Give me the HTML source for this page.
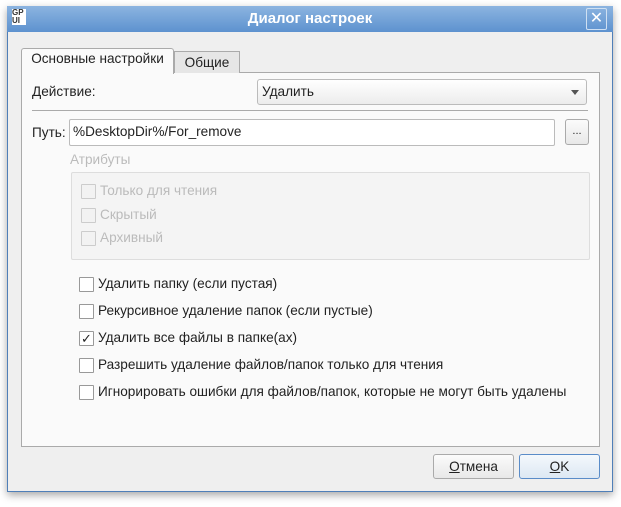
<!DOCTYPE html><html><head><meta charset="utf-8"><style>
body{margin:0;width:621px;height:507px;background:#fff;font-family:"Liberation Sans",sans-serif;font-size:13.6px;color:#222;position:relative;overflow:hidden}
.a{position:absolute}
.win{left:7px;top:6px;width:604px;height:484px;border:1px solid #4f7fb8;background:#efefef;box-shadow:0 3px 8px rgba(0,0,0,.35)}
.title{left:7px;top:6px;width:606px;height:26px;background:linear-gradient(#8cb4e0,#5d92cf);color:#fff;font-weight:bold;font-size:15px;text-align:center;line-height:26px}
.cb{width:13px;height:13px;border:1px solid #999;background:#fff;border-radius:1px}
.dis .cb{border-color:#ccc;background:#f2f2f2}
.lbl{white-space:nowrap}
.btn{border:1px solid #aaa;border-radius:3px;background:linear-gradient(#fbfbfb,#e8e8e8);text-align:center;line-height:23px}
</style></head><body>
<div class="a win"></div>
<div class="a title">Диалог настроек</div>
<div class="a" style="left:12px;top:9px;width:14px;height:16px;background:#fff;font-size:8px;line-height:8px;color:#333;font-weight:bold">GP<br>UI</div>
<div class="a" style="left:586px;top:8px;width:19px;height:20px;border:1px solid #cfe0f2;border-radius:2px;color:#fff;text-align:center;line-height:20px;font-size:16px">✕</div>
<div class="a" style="left:21px;top:72px;width:577px;height:373px;border:1px solid #aaa;background:#fafafa"></div>
<div class="a" style="left:174px;top:51px;width:64px;height:21px;border:1px solid #aaa;border-bottom:none;background:#e6e6e6;text-align:center;line-height:22px">Общие</div>
<div class="a" style="left:21px;top:48px;width:151px;height:25px;border:1px solid #aaa;border-bottom:none;border-radius:3px 3px 0 0;background:#fafafa;text-align:center;line-height:20px">Основные настройки</div>
<div class="a lbl" style="left:32px;top:84px">Действие:</div>
<div class="a" style="left:257px;top:79px;width:324px;height:24px;border:1px solid #bbb;border-radius:3px;background:linear-gradient(#fff,#ececec);line-height:24px;padding-left:4px">Удалить<span class="a" style="right:7px;top:10px;border:4px solid transparent;border-top:5px solid #555;border-bottom:none"></span></div>
<div class="a" style="left:32px;top:110px;width:556px;height:1px;background:#aaa"></div>
<div class="a lbl" style="left:32px;top:125px">Путь:</div>
<div class="a" style="left:69px;top:119px;width:481px;height:25px;border:1px solid #bbb;border-radius:2px;background:#fff;line-height:24px;padding-left:3px">%DesktopDir%/For_remove</div>
<div class="a btn" style="left:565px;top:119px;width:22px;height:24px;line-height:22px;font-size:11px">...</div>
<div class="a lbl" style="left:70px;top:152px;color:#bbb">Атрибуты</div>
<div class="a" style="left:71px;top:172px;width:517px;height:86px;border:1px solid #ddd;border-radius:2px;background:#f4f4f4"></div>
<div class="dis">
<div class="a cb" style="left:81px;top:184px"></div><div class="a lbl" style="left:100px;top:183px;color:#bbb">Только для чтения</div>
<div class="a cb" style="left:81px;top:208px"></div><div class="a lbl" style="left:100px;top:207px;color:#bbb">Скрытый</div>
<div class="a cb" style="left:81px;top:231px"></div><div class="a lbl" style="left:100px;top:230px;color:#bbb">Архивный</div>
</div>
<div class="a cb" style="left:79px;top:277px"></div><div class="a lbl" style="left:98px;top:276px">Удалить папку (если пустая)</div>
<div class="a cb" style="left:79px;top:304px"></div><div class="a lbl" style="left:98px;top:303px">Рекурсивное удаление папок (если пустые)</div>
<div class="a cb" style="left:79px;top:331px;text-align:center;line-height:13px;font-size:13px">✓</div><div class="a lbl" style="left:98px;top:330px">Удалить все файлы в папке(ах)</div>
<div class="a cb" style="left:79px;top:358px"></div><div class="a lbl" style="left:98px;top:357px">Разрешить удаление файлов/папок только для чтения</div>
<div class="a cb" style="left:79px;top:385px"></div><div class="a lbl" style="left:98px;top:384px">Игнорировать ошибки для файлов/папок, которые не могут быть удалены</div>
<div class="a btn" style="left:433px;top:454px;width:79px;height:23px"><u>О</u>тмена</div>
<div class="a btn" style="left:519px;top:454px;width:79px;height:23px;border-color:#5a8cc8;background:linear-gradient(#f4f8fc,#dde8f3)"><u>O</u>K</div>
</body></html>
